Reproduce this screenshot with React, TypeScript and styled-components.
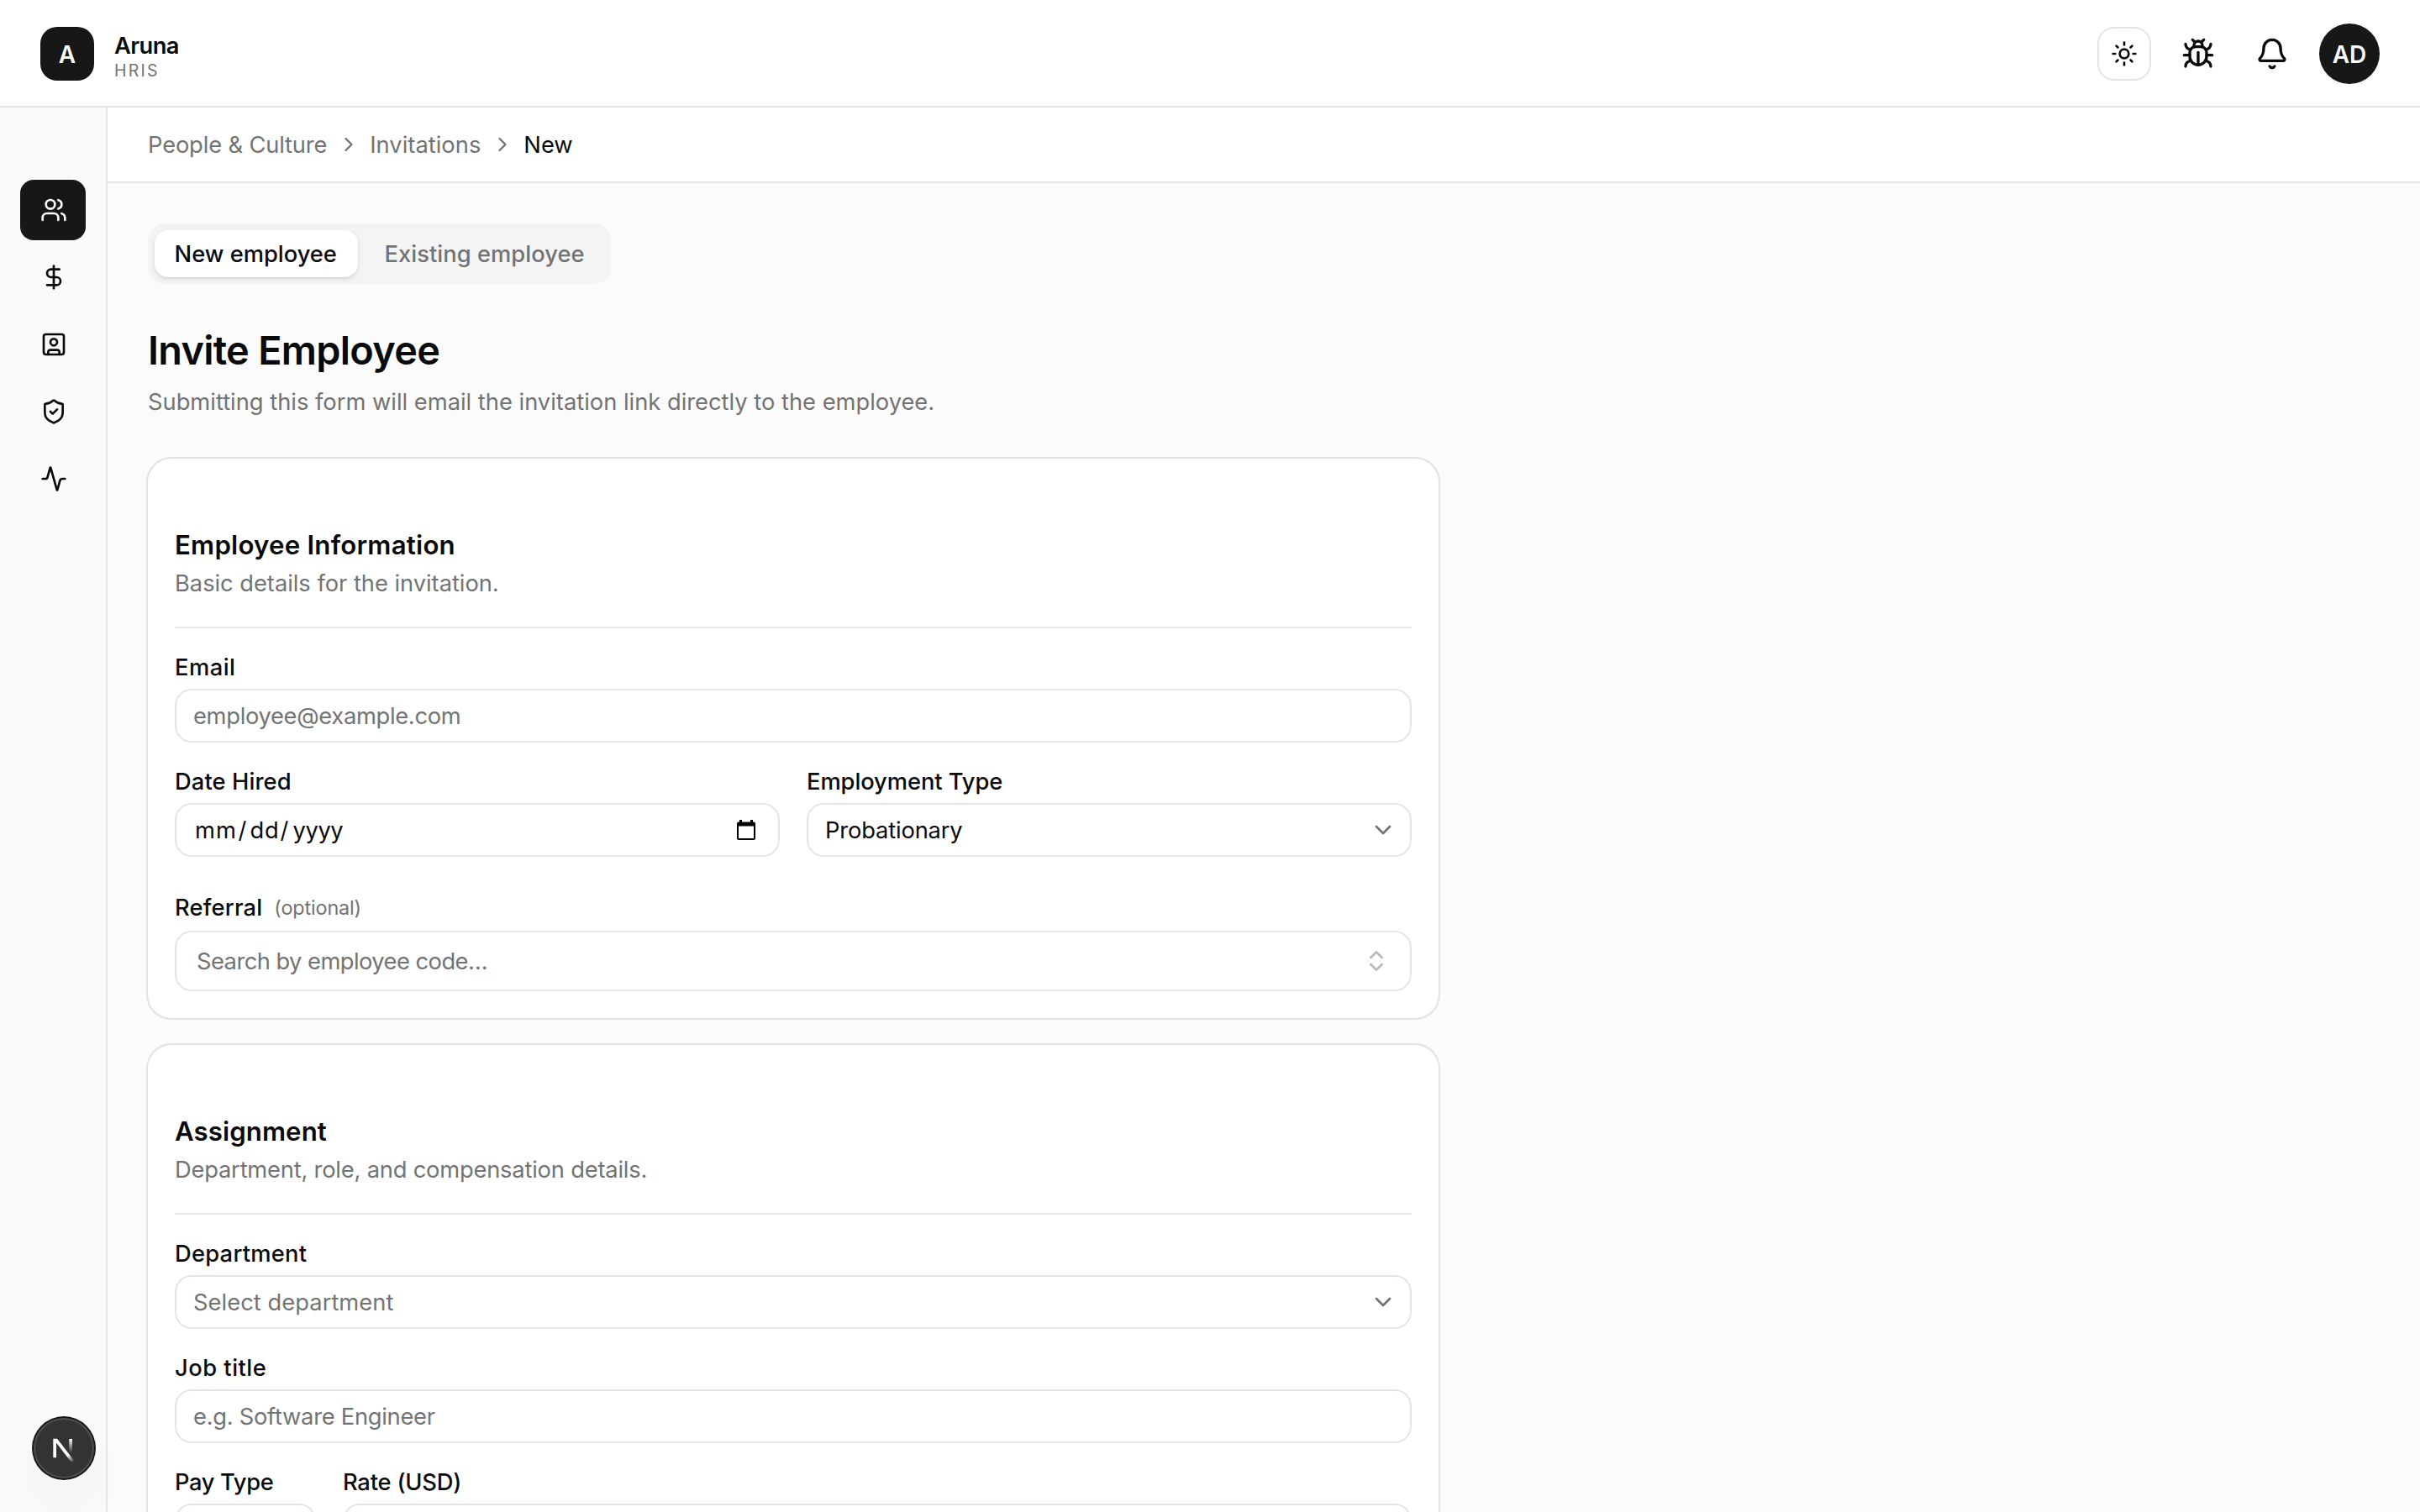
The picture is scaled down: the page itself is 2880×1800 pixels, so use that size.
import React from "react";
import styled, { createGlobalStyle } from "styled-components";
import {
  Activity,
  Bell,
  Bug,
  ChevronDown,
  ChevronRight,
  ChevronsUpDown,
  DollarSign,
  ShieldCheck,
  SquareUser,
  Sun,
  Users,
} from "lucide-react";

const color = {
  ink: "#0a0a0a",
  muted: "#737373",
  primary: "#171717",
  onPrimary: "#fafafa",
  border: "#e5e5e5",
  ring: "rgba(10, 10, 10, 0.1)",
  sidebar: "#fafafa",
  page: "#fbfbfb",
  tabs: "#f4f4f4",
};

const GlobalStyle = createGlobalStyle`
  *, *::before, *::after { box-sizing: border-box; }
  html, body { margin: 0; padding: 0; }
  body {
    height: 1800px;
    overflow: hidden;
    background: ${color.page};
    color: ${color.ink};
    font-family: Inter, "Liberation Sans", sans-serif;
    font-size: 27.3px;
    line-height: 40px;
  }
  svg { display: block; flex-shrink: 0; }
`;

const Text = styled.span<{ $track?: number }>`
  display: inline-block;
  letter-spacing: ${(p) => p.$track ?? 0}px;
  white-space: nowrap;
  transform: translateY(1px);
`;

const Shell = styled.div`
  display: flex;
  flex-direction: column;
  height: 1800px;
  overflow: hidden;
`;

const TopBar = styled.header`
  display: flex;
  align-items: center;
  justify-content: space-between;
  flex: 0 0 128px;
  padding: 2px 48px 0;
  background: #fff;
  border-bottom: 2px solid ${color.border};
`;

const Brand = styled.div`
  display: flex;
  align-items: center;
  gap: 24px;
`;

const Logo = styled.div`
  display: grid;
  place-items: center;
  width: 64px;
  height: 64px;
  border-radius: 20px;
  background: ${color.primary};
  color: ${color.onPrimary};
  font-size: 28px;
  font-weight: 600;
`;

const BrandText = styled.div`
  display: flex;
  flex-direction: column;
  padding-top: 2px;
`;

const BrandName = styled(Text)`
  font-weight: 600;
  line-height: 36px;
`;

const BrandSub = styled(Text)`
  font-size: 19.5px;
  line-height: 22px;
  color: ${color.muted};
`;

const Actions = styled.div`
  display: flex;
  align-items: center;
  gap: 24px;
`;

const IconButton = styled.button<{ $outlined?: boolean }>`
  display: grid;
  place-items: center;
  width: 64px;
  height: 64px;
  padding: 0;
  border: 2px solid ${(p) => (p.$outlined ? color.border : "transparent")};
  border-radius: 20px;
  background: transparent;
  color: ${color.ink};
`;

const Avatar = styled.div`
  display: grid;
  place-items: center;
  width: 72px;
  height: 72px;
  border-radius: 50%;
  background: ${color.primary};
  color: ${color.onPrimary};
  font-size: 28px;
  font-weight: 600;
`;

const Body = styled.div`
  display: flex;
  flex: 1;
  min-height: 0;
`;

const Sidebar = styled.nav`
  display: flex;
  flex-direction: column;
  gap: 8px;
  flex: 0 0 128px;
  padding: 86px 24px 0;
  background: ${color.sidebar};
  border-right: 2px solid ${color.border};
`;

const NavItem = styled.a<{ $active?: boolean }>`
  display: flex;
  align-items: center;
  height: 72px;
  padding-left: 24px;
  border-radius: 16px;
  background: ${(p) => (p.$active ? color.primary : "transparent")};
  color: ${(p) => (p.$active ? color.onPrimary : color.ink)};
`;

const Column = styled.div`
  display: flex;
  flex-direction: column;
  flex: 1;
  min-width: 0;
`;

const Breadcrumbs = styled.nav`
  display: flex;
  align-items: center;
  flex: 0 0 90px;
  gap: 11.5px;
  padding: 0 48px;
  background: #fff;
  border-bottom: 2px solid ${color.border};
  color: ${color.muted};
`;

const Crumb = styled(Text)<{ $current?: boolean }>`
  color: ${(p) => (p.$current ? color.ink : color.muted)};
`;

const Main = styled.main`
  display: flex;
  flex-direction: column;
  align-items: flex-start;
  flex: 1;
  min-height: 0;
  padding: 48px;
  overflow: hidden;
`;

const Tabs = styled.div`
  display: flex;
  flex-shrink: 0;
  gap: 8px;
  height: 72px;
  padding: 8px;
  border-radius: 20px;
  background: ${color.tabs};
`;

const Tab = styled.button<{ $active?: boolean; $width: number }>`
  width: ${(p) => p.$width}px;
  height: 56px;
  padding: 0 0 0 23.5px;
  border: 0;
  border-radius: 16px;
  background: ${(p) => (p.$active ? "#fff" : "transparent")};
  box-shadow: ${(p) =>
    p.$active ? "0 2px 6px rgba(0,0,0,.1), 0 2px 4px -2px rgba(0,0,0,.1)" : "none"};
  color: ${(p) => (p.$active ? color.ink : color.muted)};
  font: inherit;
  font-weight: 500;
  text-align: left;
`;

const PageHeading = styled.div`
  display: flex;
  flex-direction: column;
  flex-shrink: 0;
  gap: 12px;
  margin: 48px 0;
`;

const Title = styled.h1`
  margin: 0;
  height: 60px;
  font-size: 46.8px;
  font-weight: 600;
  line-height: 60px;
`;

const Muted = styled.p`
  margin: 0;
  height: 40px;
  color: ${color.muted};
`;

const Cards = styled.div`
  display: flex;
  flex-direction: column;
  flex-shrink: 0;
  gap: 32px;
  width: 1536px;
`;

const Card = styled.section`
  display: flex;
  flex-direction: column;
  padding: 80px 32px 32px;
  border-radius: 28px;
  background: #fff;
  box-shadow: 0 0 0 2px ${color.ring};
`;

const CardHeader = styled.div`
  display: flex;
  flex-direction: column;
  gap: 4px;
  padding-bottom: 32px;
  margin-bottom: 32px;
  border-bottom: 2px solid ${color.border};
`;

const CardTitle = styled.h2`
  margin: 0;
  height: 44px;
  font-size: 31.2px;
  font-weight: 600;
  line-height: 44px;
`;

const Fields = styled.div`
  display: flex;
  flex-direction: column;
  gap: 32px;
`;

const FieldRow = styled.div<{ $columns: string }>`
  display: grid;
  grid-template-columns: ${(p) => p.$columns};
  gap: 32px;
`;

const Field = styled.div`
  display: flex;
  flex-direction: column;
  gap: 12px;
`;

const ReferralField = styled.div`
  display: flex;
  flex-direction: column;
  gap: 8px;
  padding-top: 8px;
`;

const Label = styled.label`
  height: 28px;
  font-weight: 500;
  line-height: 28px;
`;

const ReferralLabel = styled(Label)`
  display: flex;
  gap: 14px;
  height: 40px;
  line-height: 40px;
`;

const Optional = styled(Text)`
  color: ${color.muted};
  font-size: 23.4px;
  font-weight: 400;
`;

const Control = styled.div<{ $placeholder?: boolean; $tall?: boolean }>`
  display: flex;
  align-items: center;
  justify-content: space-between;
  height: ${(p) => (p.$tall ? 72 : 64)}px;
  padding: 0 ${(p) => (p.$tall ? 24 : 16)}px 0 ${(p) => (p.$tall ? 24 : 20)}px;
  border: 2px solid ${color.border};
  border-radius: 20px;
  color: ${(p) => (p.$placeholder ? color.muted : color.ink)};
`;

const DateParts = styled.span`
  display: flex;
  padding-left: 2px;
`;

const DatePart = styled(Text)<{ $width: number }>`
  width: ${(p) => p.$width}px;
`;

const CalendarSlot = styled.span`
  padding-right: 11px;
`;

const MutedIcon = styled.span<{ $faint?: boolean }>`
  color: ${color.muted};
  opacity: ${(p) => (p.$faint ? 0.5 : 1)};
`;

const DevBadge = styled.div`
  position: fixed;
  left: 40px;
  bottom: 40px;
  display: grid;
  place-items: center;
  width: 72px;
  height: 72px;
  border-radius: 50%;
  background: #333;
  box-shadow:
    0 0 0 2px #171717,
    inset 0 0 0 2px rgba(255, 255, 255, 0.14),
    0 32px 64px -16px rgba(0, 0, 0, 0.1);
`;

const CalendarIcon = () => (
  <svg width="22" height="26" viewBox="0 0 22 26">
    <path d="M3 1h3v3H3zM16 1h3v3h-3z" fill="#000" />
    <path
      fillRule="evenodd"
      fill="#000"
      d="M2 3.5h18a2 2 0 0 1 2 2V23a2 2 0 0 1-2 2H2a2 2 0 0 1-2-2V5.500a2 2 0 0 1 2-2zM2 8.500V23h18V8.500z"
    />
  </svg>
);

const NextMark = () => (
  <svg width="40" height="40" viewBox="0 0 40 40" fill="none">
    <defs>
      <linearGradient id="diag" gradientUnits="userSpaceOnUse" x1="9.956" y1="11.12" x2="13.3" y2="15.3">
        <stop stopColor="#fff" />
        <stop offset="1" stopColor="#fff" stopOpacity="0" />
      </linearGradient>
      <linearGradient id="stem" gradientUnits="userSpaceOnUse" x1="11.82" y1="1.4" x2="11.79" y2="9.63">
        <stop stopColor="#fff" />
        <stop offset="1" stopColor="#fff" stopOpacity="0" />
      </linearGradient>
      <clipPath id="flatTop">
        <rect x="0" y="1.3" width="20" height="16" />
      </clipPath>
    </defs>
    <g transform="translate(4.5 6.1) scale(2)" clipPath="url(#flatTop)" strokeWidth="1.86">
      <path d="M13.3 15.2 2.34 1v11.6" stroke="url(#diag)" />
      <path d="M11.825 1.3v11.6" stroke="url(#stem)" />
    </g>
  </svg>
);

const DropDown = () => (
  <MutedIcon>
    <ChevronDown size={32} />
  </MutedIcon>
);

const navItems = [Users, DollarSign, SquareUser, ShieldCheck, Activity];

export default function App() {
  return (
    <Shell>
      <GlobalStyle />
      <TopBar>
        <Brand>
          <Logo>
            <Text>A</Text>
          </Logo>
          <BrandText>
            <BrandName $track={-0.58}>Aruna</BrandName>
            <BrandSub $track={2.2}>HRIS</BrandSub>
          </BrandText>
        </Brand>
        <Actions>
          <IconButton $outlined>
            <Sun size={32} />
          </IconButton>
          <IconButton>
            <Bug size={40} />
          </IconButton>
          <IconButton>
            <Bell size={40} />
          </IconButton>
          <Avatar>
            <Text>AD</Text>
          </Avatar>
        </Actions>
      </TopBar>

      <Body>
        <Sidebar>
          {navItems.map((Icon, i) => (
            <NavItem key={i} $active={i === 0}>
              <Icon size={32} />
            </NavItem>
          ))}
        </Sidebar>

        <Column>
          <Breadcrumbs>
            <Crumb $track={-0.15}>People &amp; Culture</Crumb>
            <ChevronRight size={28} />
            <Crumb $track={0.02}>Invitations</Crumb>
            <ChevronRight size={28} />
            <Crumb $current>New</Crumb>
          </Breadcrumbs>

          <Main>
            <Tabs>
              <Tab $active $width={242}>
                <Text>New employee</Text>
              </Tab>
              <Tab $width={285}>
                <Text $track={0.05}>Existing employee</Text>
              </Tab>
            </Tabs>

            <PageHeading>
              <Title>
                <Text $track={-0.7}>Invite Employee</Text>
              </Title>
              <Muted>
                <Text>Submitting this form will email the invitation link directly to the employee.</Text>
              </Muted>
            </PageHeading>

            <Cards>
              <Card>
                <CardHeader>
                  <CardTitle>
                    <Text $track={0.22}>Employee Information</Text>
                  </CardTitle>
                  <Muted>
                    <Text $track={-0.03}>Basic details for the invitation.</Text>
                  </Muted>
                </CardHeader>
                <Fields>
                  <Field>
                    <Label>
                      <Text $track={0.5}>Email</Text>
                    </Label>
                    <Control $placeholder>
                      <Text $track={-0.3}>employee@example.com</Text>
                    </Control>
                  </Field>
                  <FieldRow $columns="1fr 1fr">
                    <Field>
                      <Label>
                        <Text $track={0.1}>Date Hired</Text>
                      </Label>
                      <Control>
                        <DateParts>
                          <DatePart $width={51.5} $track={1}>mm</DatePart>
                          <DatePart $width={14}>/</DatePart>
                          <DatePart $width={36} $track={0.8}>dd</DatePart>
                          <DatePart $width={15}>/</DatePart>
                          <DatePart $width={62} $track={-0.4}>yyyy</DatePart>
                        </DateParts>
                        <CalendarSlot>
                          <CalendarIcon />
                        </CalendarSlot>
                      </Control>
                    </Field>
                    <Field>
                      <Label>
                        <Text $track={-0.06}>Employment Type</Text>
                      </Label>
                      <Control>
                        <Text $track={-0.15}>Probationary</Text>
                        <DropDown />
                      </Control>
                    </Field>
                  </FieldRow>
                  <ReferralField>
                    <ReferralLabel>
                      <Text $track={0.2}>Referral</Text>
                      <Optional $track={-0.15}>(optional)</Optional>
                    </ReferralLabel>
                    <Control $placeholder $tall>
                      <Text $track={-0.54}>Search by employee code…</Text>
                      <MutedIcon $faint>
                        <ChevronsUpDown size={32} />
                      </MutedIcon>
                    </Control>
                  </ReferralField>
                </Fields>
              </Card>

              <Card>
                <CardHeader>
                  <CardTitle>
                    <Text $track={0.08}>Assignment</Text>
                  </CardTitle>
                  <Muted>
                    <Text $track={-0.2}>Department, role, and compensation details.</Text>
                  </Muted>
                </CardHeader>
                <Fields>
                  <Field>
                    <Label>
                      <Text $track={0.25}>Department</Text>
                    </Label>
                    <Control $placeholder>
                      <Text $track={0.05}>Select department</Text>
                      <DropDown />
                    </Control>
                  </Field>
                  <Field>
                    <Label>
                      <Text $track={0.5}>Job title</Text>
                    </Label>
                    <Control $placeholder>
                      <Text $track={-0.27}>e.g. Software Engineer</Text>
                    </Control>
                  </Field>
                  <FieldRow $columns="168px 1fr">
                    <Field>
                      <Label>
                        <Text $track={-0.35}>Pay Type</Text>
                      </Label>
                      <Control />
                    </Field>
                    <Field>
                      <Label>
                        <Text $track={-0.2}>Rate (USD)</Text>
                      </Label>
                      <Control />
                    </Field>
                  </FieldRow>
                </Fields>
              </Card>
            </Cards>
          </Main>
        </Column>
      </Body>

      <DevBadge>
        <NextMark />
      </DevBadge>
    </Shell>
  );
}
